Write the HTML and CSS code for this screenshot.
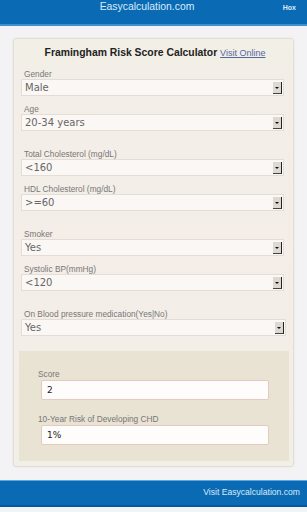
FILE: index.html
```html
<!DOCTYPE html>
<html lang="en">
<head>
    <meta charset="UTF-8">
    <meta name="viewport" content="width=device-width, initial-scale=1.0">
    <title>Framingham Risk Score Calculator</title>
    <link rel="stylesheet" href="styles.css">
</head>
<body>
    <div class="header">
        <span class="brand">Easycalculation.com</span>
        <span class="hox">Hox</span>
    </div>

    <div class="page">
        <div class="card">
            <h2>Framingham Risk Score Calculator <a href="#">Visit Online</a></h2>

            <div class="field">
                <label>Gender</label>
                <div class="select"><span>Male</span><i class="arrow"></i></div>
            </div>
            <div class="field">
                <label>Age</label>
                <div class="select"><span>20-34 years</span><i class="arrow"></i></div>
            </div>
            <div class="field gap">
                <label>Total Cholesterol (mg/dL)</label>
                <div class="select"><span>&lt;160</span><i class="arrow"></i></div>
            </div>
            <div class="field">
                <label>HDL Cholesterol (mg/dL)</label>
                <div class="select"><span>&gt;=60</span><i class="arrow"></i></div>
            </div>
            <div class="field gap">
                <label>Smoker</label>
                <div class="select"><span>Yes</span><i class="arrow"></i></div>
            </div>
            <div class="field">
                <label>Systolic BP(mmHg)</label>
                <div class="select"><span>&lt;120</span><i class="arrow"></i></div>
            </div>
            <div class="field gap">
                <label>On Blood pressure medication(Yes|No)</label>
                <div class="select wide"><span>Yes</span><i class="arrow"></i></div>
            </div>

            <div class="result">
                <label>Score</label>
                <input type="text" value="2">
                <label>10-Year Risk of Developing CHD</label>
                <input type="text" value="1%">
            </div>
        </div>
    </div>

    <div class="footer">
        <a href="#">Visit Easycalculation.com</a>
    </div>
</body>
</html>
```

FILE: styles.css
```css
body {
    margin: 0;
    padding: 0;
    width: 307px;
    height: 512px;
    background: #f3f3f6;
    font-family: "Liberation Sans", Arial, sans-serif;
    overflow: hidden;
}

.header {
    height: 24px;
    background: #0b6ab4;
    border-bottom: 2px solid #3d8fd0;
    display: flex;
    align-items: flex-start;
    justify-content: center;
    position: relative;
}

.brand {
    color: #d8ecfb;
    font-size: 10.4px;
    line-height: 12px;
    margin-left: -13px;
    padding-top: 1px;
}

.hox {
    position: absolute;
    right: 11px;
    top: 4px;
    color: #d8ecfb;
    font-size: 7px;
    font-weight: bold;
}

.page {
    padding: 12px 13px 13px 13px;
    height: 429px;
}

.card {
    background: linear-gradient(to bottom, #f2efe7, #f4ede8 50%, #f2efe6);
    border: 1px solid #e2dfd2;
    border-radius: 3px;
    box-shadow: 0 0 2px rgba(0, 0, 0, 0.08);
    padding: 4px 4px 5px 7px;
    height: 418px;
}

h2 {
    margin: 3px 0 9px 0;
    text-align: center;
    font-size: 10.4px;
    line-height: 13px;
    color: #222;
}

h2 a {
    font-size: 9px;
    font-weight: normal;
    color: #5567a0;
}

.field {
    margin-top: 8px;
}

.field:first-of-type {
    margin-top: 0;
}

.field.gap {
    margin-top: 18px;
}

label {
    display: block;
    font-size: 8.3px;
    line-height: 10px;
    color: #777;
    margin-left: 3px;
}

.select {
    box-sizing: border-box;
    height: 17px;
    width: 263px;
    border: 1px solid #e3ddd6;
    background: #fbf7f4;
    display: flex;
    align-items: center;
    justify-content: space-between;
    padding-left: 3px;
}

.select.wide {
    width: 265px;
}

.select span {
    font-family: "DejaVu Sans", sans-serif;
    font-size: 10px;
    color: #666;
}

.arrow {
    width: 8px;
    height: 11px;
    background: #ddd8d2;
    border-right: 1px solid #222;
    border-bottom: 1px solid #444;
    margin-right: 1px;
    position: relative;
}

.arrow::after {
    content: "";
    position: absolute;
    left: 2px;
    top: 5px;
    border-left: 2px solid transparent;
    border-right: 2px solid transparent;
    border-top: 2px solid #111;
}

.result {
    box-sizing: border-box;
    margin: 15px 0 0 -2px;
    height: 110px;
    background: #e8e3d3;
    padding: 18px 22px 2px 19px;
}

.result label {
    margin-left: 0;
    color: #777;
}

.result input {
    box-sizing: border-box;
    display: block;
    width: 228px;
    height: 20px;
    padding: 1px 5px;
    border: 1px solid #e7c9c4;
    border-radius: 2px;
    background: #fffdfb;
    font-family: "DejaVu Sans", sans-serif;
    font-size: 9px;
    color: #222;
    margin: 1px 0 14px 3px;
    outline: none;
}

.footer {
    height: 24px;
    background: #0b6ab4;
    border-top: 1px solid #5aa8e6;
    border-bottom: 2px solid #09579a;
    text-align: right;
    padding-right: 7px;
}

.footer a {
    color: #d8ecfb;
    font-size: 8.6px;
    text-decoration: none;
    line-height: 14px;
}
```
